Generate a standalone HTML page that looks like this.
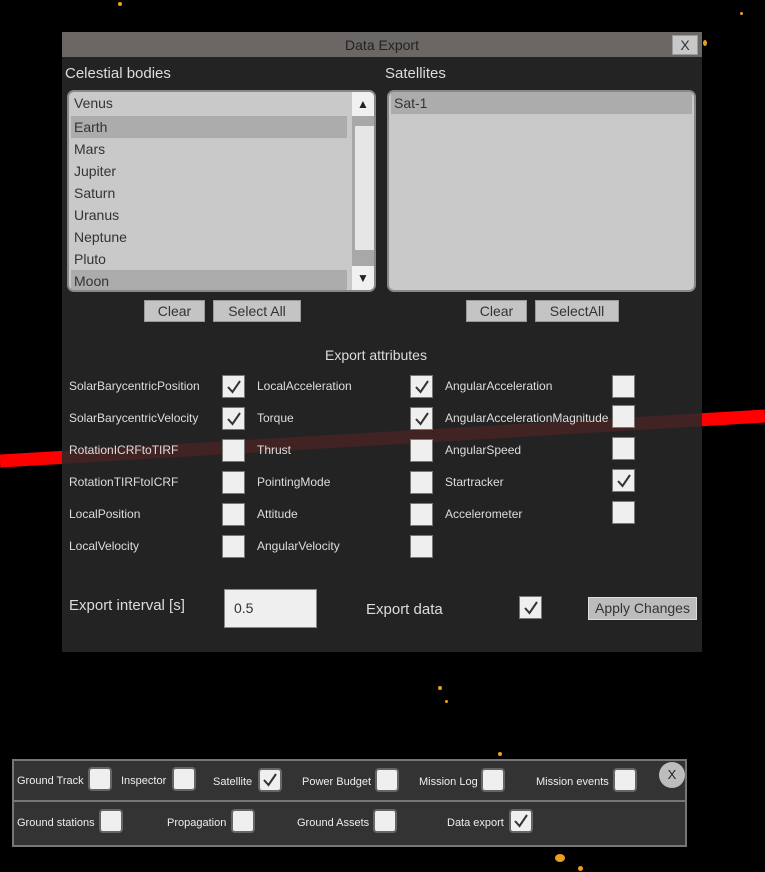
<!DOCTYPE html>
<html><head><meta charset="utf-8"><style>
*{box-sizing:border-box;margin:0;padding:0}
body{width:765px;height:872px;background:#000;position:relative;overflow:hidden;font-family:"Liberation Sans","DejaVu Sans",sans-serif}
.a{position:absolute}
.dlg{left:62px;top:32px;width:640px;height:620px;background:rgba(40,40,40,0.88)}
.title{left:62px;top:32px;width:640px;height:25px;background:#6b6764;color:#222;font-size:14px;text-align:center;line-height:26px}
.t{color:#ddd;white-space:nowrap}
.lb{background:#c9c9c9;border:2px solid #888;border-radius:7px}
.it{left:2px;font-size:14px;color:#333;height:22px;line-height:22px;padding-left:3px}
.sel{background:#acacac}
.btn{background:#c4c4c4;border:1px solid #999;color:#333;font-size:14px;text-align:center;line-height:20px;height:22px}
.cb{width:23px;height:23px;background:#efefef;border:1px solid #777}
.cb svg{position:absolute;left:2px;top:2px}
.lab{font-size:12px;color:#ddd;white-space:nowrap}
.pcb{width:24px;height:24px;background:#efefef;border:2px solid #666;border-radius:4px}
.pcb svg{position:absolute;left:1px;top:1px}
.pl{font-size:11px;color:#eee;white-space:nowrap}
.star{background:#e8a020;border-radius:50%}
</style></head><body>
<div class="a star" style="left:118px;top:2px;width:4px;height:4px"></div>
<div class="a star" style="left:703px;top:40px;width:4px;height:6px"></div>
<div class="a star" style="left:740px;top:12px;width:3px;height:3px"></div>
<div class="a star" style="left:438px;top:686px;width:4px;height:4px"></div>
<div class="a star" style="left:445px;top:700px;width:3px;height:3px"></div>
<div class="a star" style="left:555px;top:854px;width:10px;height:8px"></div>
<div class="a star" style="left:498px;top:752px;width:4px;height:4px"></div>
<div class="a star" style="left:578px;top:866px;width:5px;height:5px"></div>
<svg class="a" style="left:0;top:0" width="765" height="872"><line x1="0" y1="461" x2="765" y2="416" stroke="#ff0000" stroke-width="13"/></svg>
<div class="a dlg"></div>
<div class="a title">Data Export</div>
<div class="a btn" style="left:672px;top:35px;width:26px;height:20px;line-height:18px;background:#c8c8c8">X</div>

<div class="a t" style="left:65px;top:65px;font-size:15px">Celestial bodies</div>
<div class="a t" style="left:385px;top:65px;font-size:15px">Satellites</div>

<div class="a lb" style="left:67px;top:90px;width:309px;height:202px;overflow:hidden">
<div class="a it" style="top:0;width:276px">Venus</div>
<div class="a it sel" style="top:24px;width:276px">Earth</div>
<div class="a it" style="top:46px">Mars</div>
<div class="a it" style="top:68px">Jupiter</div>
<div class="a it" style="top:90px">Saturn</div>
<div class="a it" style="top:112px">Uranus</div>
<div class="a it" style="top:134px">Neptune</div>
<div class="a it" style="top:156px">Pluto</div>
<div class="a it sel" style="top:178px;width:276px">Moon</div>
<div class="a" style="left:283px;top:0;width:22px;height:198px;background:#a8a8a8">
<div class="a" style="left:0;top:0;width:22px;height:24px;background:#f0f0f0;font-size:12px;text-align:center;line-height:24px;color:#222">▲</div>
<div class="a" style="left:3px;top:34px;width:19px;height:124px;background:#e6e6e6"></div>
<div class="a" style="left:0;top:174px;width:22px;height:24px;background:#f0f0f0;font-size:12px;text-align:center;line-height:24px;color:#222">▼</div>
</div></div>

<div class="a lb" style="left:387px;top:90px;width:309px;height:202px;overflow:hidden">
<div class="a it sel" style="top:0;left:2px;width:301px">Sat-1</div>
</div>

<div class="a btn" style="left:144px;top:300px;width:61px">Clear</div>
<div class="a btn" style="left:213px;top:300px;width:88px">Select All</div>
<div class="a btn" style="left:466px;top:300px;width:61px">Clear</div>
<div class="a btn" style="left:535px;top:300px;width:84px">SelectAll</div>

<div class="a t" style="left:325px;top:347px;font-size:14px">Export attributes</div>

<div class="a lab" style="left:69px;top:379px">SolarBarycentricPosition</div>
<div class="a lab" style="left:69px;top:411px">SolarBarycentricVelocity</div>
<div class="a lab" style="left:69px;top:443px">RotationICRFtoTIRF</div>
<div class="a lab" style="left:69px;top:475px">RotationTIRFtoICRF</div>
<div class="a lab" style="left:69px;top:507px">LocalPosition</div>
<div class="a lab" style="left:69px;top:539px">LocalVelocity</div>
<div class="a lab" style="left:257px;top:379px">LocalAcceleration</div>
<div class="a lab" style="left:257px;top:411px">Torque</div>
<div class="a lab" style="left:257px;top:443px">Thrust</div>
<div class="a lab" style="left:257px;top:475px">PointingMode</div>
<div class="a lab" style="left:257px;top:507px">Attitude</div>
<div class="a lab" style="left:257px;top:539px">AngularVelocity</div>
<div class="a lab" style="left:445px;top:379px">AngularAcceleration</div>
<div class="a lab" style="left:445px;top:411px">AngularAccelerationMagnitude</div>
<div class="a lab" style="left:445px;top:443px">AngularSpeed</div>
<div class="a lab" style="left:445px;top:475px">Startracker</div>
<div class="a lab" style="left:445px;top:507px">Accelerometer</div>

<div class="a cb" style="left:222px;top:375px"><svg width="18" height="18"><path d="M3 9 L7.5 14 L15 3" fill="none" stroke="#333" stroke-width="2"/></svg></div>
<div class="a cb" style="left:222px;top:407px"><svg width="18" height="18"><path d="M3 9 L7.5 14 L15 3" fill="none" stroke="#333" stroke-width="2"/></svg></div>
<div class="a cb" style="left:222px;top:439px"></div>
<div class="a cb" style="left:222px;top:471px"></div>
<div class="a cb" style="left:222px;top:503px"></div>
<div class="a cb" style="left:222px;top:535px"></div>
<div class="a cb" style="left:410px;top:375px"><svg width="18" height="18"><path d="M3 9 L7.5 14 L15 3" fill="none" stroke="#333" stroke-width="2"/></svg></div>
<div class="a cb" style="left:410px;top:407px"><svg width="18" height="18"><path d="M3 9 L7.5 14 L15 3" fill="none" stroke="#333" stroke-width="2"/></svg></div>
<div class="a cb" style="left:410px;top:439px"></div>
<div class="a cb" style="left:410px;top:471px"></div>
<div class="a cb" style="left:410px;top:503px"></div>
<div class="a cb" style="left:410px;top:535px"></div>
<div class="a cb" style="left:612px;top:375px"></div>
<div class="a cb" style="left:612px;top:405px"></div>
<div class="a cb" style="left:612px;top:437px"></div>
<div class="a cb" style="left:612px;top:469px"><svg width="18" height="18"><path d="M3 9 L7.5 14 L15 3" fill="none" stroke="#333" stroke-width="2"/></svg></div>
<div class="a cb" style="left:612px;top:501px"></div>

<div class="a t" style="left:69px;top:597px;font-size:15px">Export interval [s]</div>
<div class="a" style="left:224px;top:589px;width:93px;height:39px;background:#efefef;border:1px solid #888;font-size:14px;color:#333;padding:10px 0 0 9px">0.5</div>
<div class="a t" style="left:366px;top:601px;font-size:15px">Export data</div>
<div class="a cb" style="left:519px;top:596px"><svg width="18" height="18"><path d="M3 9 L7.5 14 L15 3" fill="none" stroke="#333" stroke-width="2"/></svg></div>
<div class="a btn" style="left:588px;top:597px;width:109px;height:23px;line-height:21px;border:1px solid #ddd;background:#bcbcbc">Apply Changes</div>

<div class="a" style="left:12px;top:759px;width:675px;height:88px;background:#333;border:2px solid #767676"></div>
<div class="a" style="left:12px;top:800px;width:675px;height:2px;background:#767676"></div>
<div class="a pl" style="left:17px;top:775px">Ground Track</div>
<div class="a pcb" style="left:88px;top:767px"></div>
<div class="a pl" style="left:121px;top:775px">Inspector</div>
<div class="a pcb" style="left:172px;top:767px"></div>
<div class="a pl" style="left:213px;top:776px">Satellite</div>
<div class="a pcb" style="left:258px;top:768px"><svg width="18" height="18"><path d="M3 9 L7.5 14 L15 3" fill="none" stroke="#333" stroke-width="2"/></svg></div>
<div class="a pl" style="left:302px;top:776px">Power Budget</div>
<div class="a pcb" style="left:375px;top:768px"></div>
<div class="a pl" style="left:419px;top:776px">Mission Log</div>
<div class="a pcb" style="left:481px;top:768px"></div>
<div class="a pl" style="left:536px;top:776px">Mission events</div>
<div class="a pcb" style="left:613px;top:768px"></div>
<div class="a" style="left:659px;top:762px;width:26px;height:26px;border-radius:50%;background:#bdbdbd;color:#222;font-size:13px;text-align:center;line-height:26px">X</div>
<div class="a pl" style="left:17px;top:817px">Ground stations</div>
<div class="a pcb" style="left:99px;top:809px"></div>
<div class="a pl" style="left:167px;top:817px">Propagation</div>
<div class="a pcb" style="left:231px;top:809px"></div>
<div class="a pl" style="left:297px;top:817px">Ground Assets</div>
<div class="a pcb" style="left:373px;top:809px"></div>
<div class="a pl" style="left:447px;top:817px">Data export</div>
<div class="a pcb" style="left:509px;top:809px"><svg width="18" height="18"><path d="M3 9 L7.5 14 L15 3" fill="none" stroke="#333" stroke-width="2"/></svg></div>
</body></html>
